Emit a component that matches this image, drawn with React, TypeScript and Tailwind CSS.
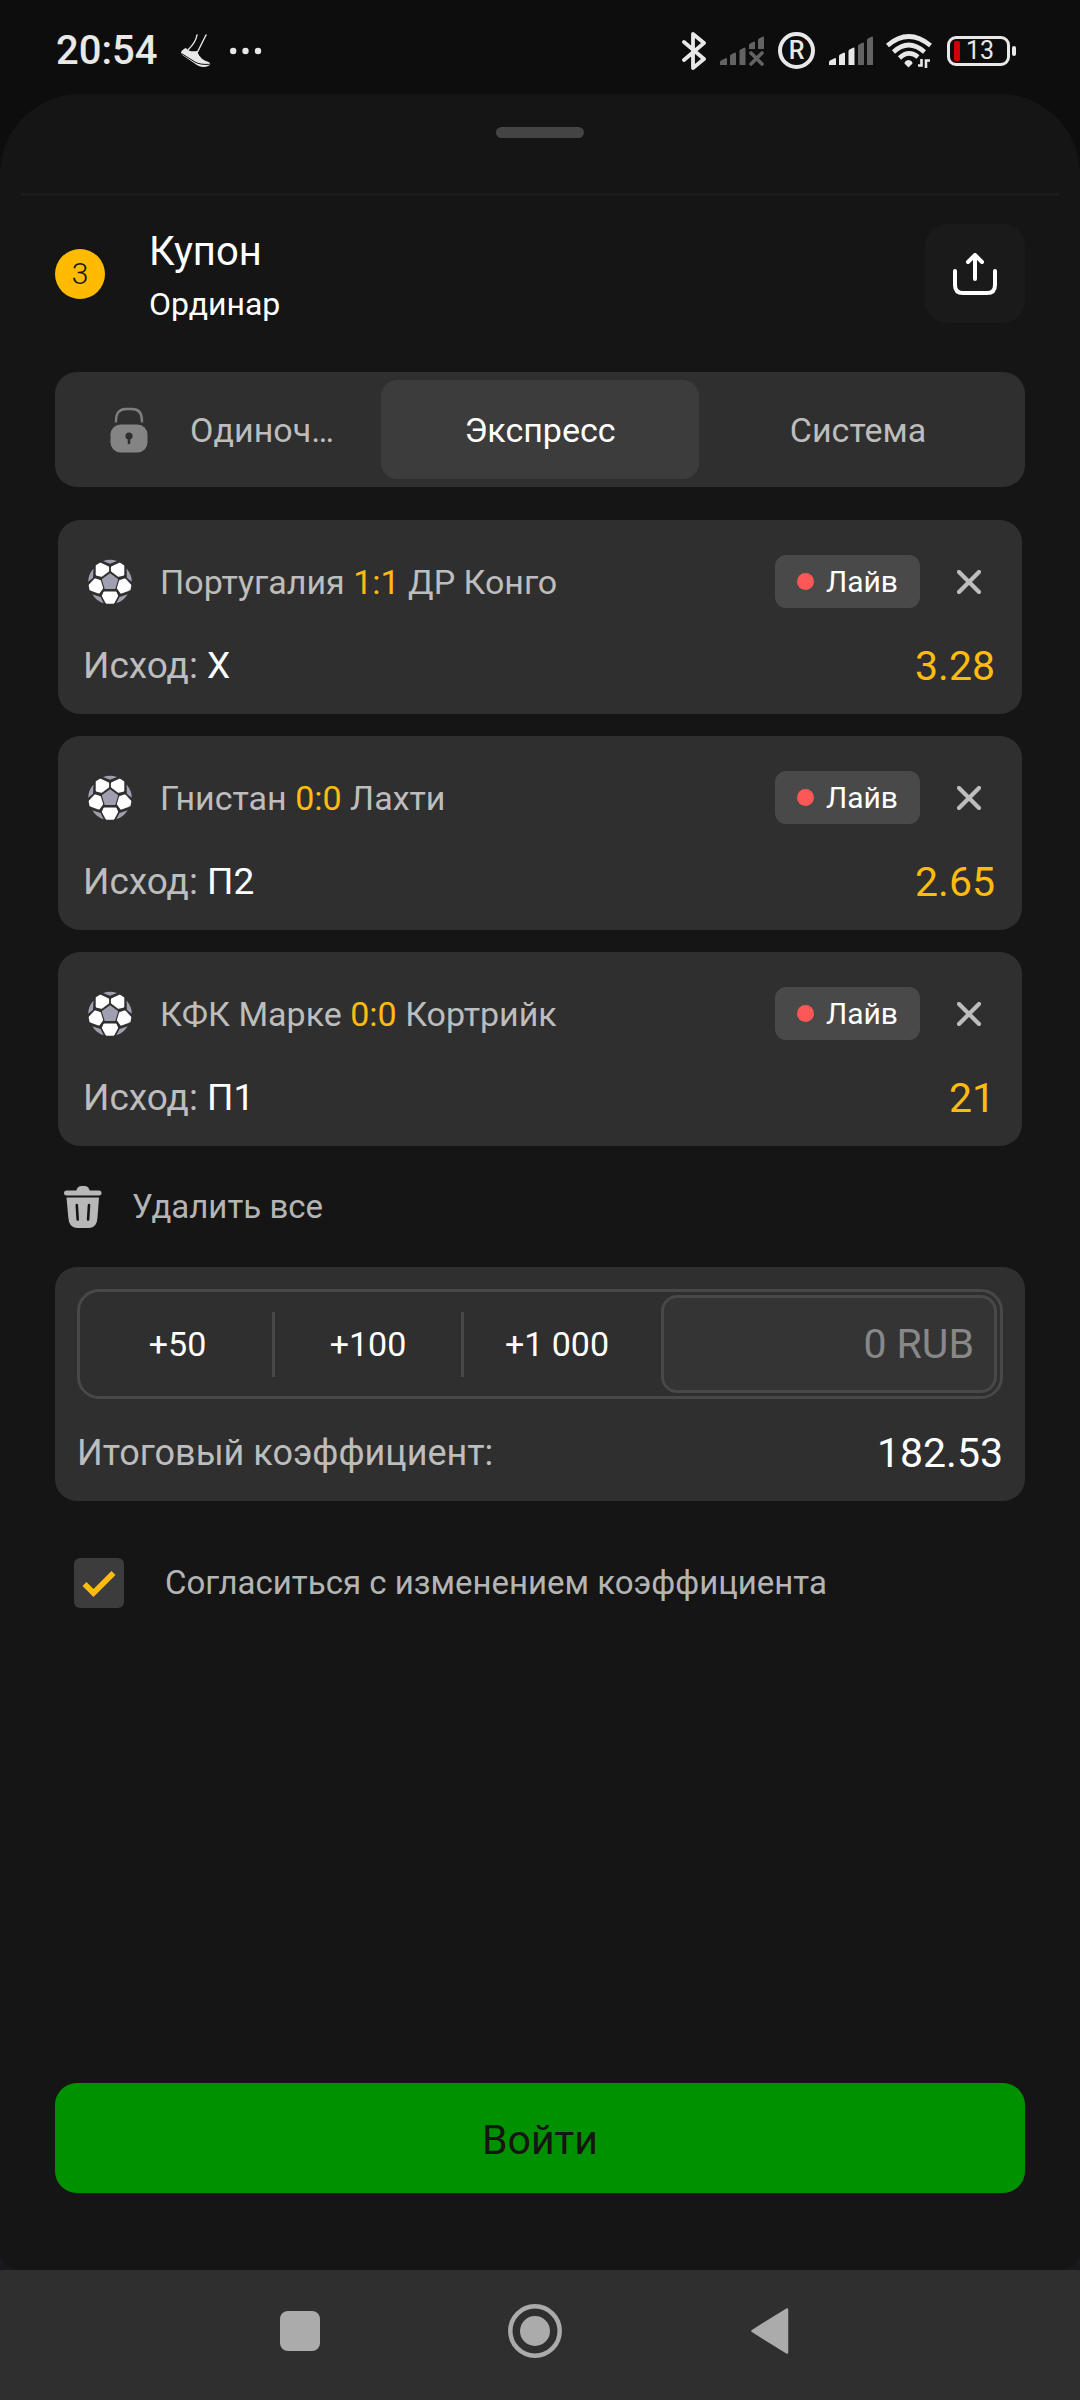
import { useState } from "react";
import clsx from "clsx";

interface Bet {
  id: number;
  home: string;
  score: string;
  away: string;
  outcome: string;
  odds: string;
}

const INITIAL_BETS: Bet[] = [
  { id: 1, home: "Португалия", score: "1:1", away: "ДР Конго", outcome: "X", odds: "3.28" },
  { id: 2, home: "Гнистан", score: "0:0", away: "Лахти", outcome: "П2", odds: "2.65" },
  { id: 3, home: "КФК Марке", score: "0:0", away: "Кортрийк", outcome: "П1", odds: "21" },
];

const TABS = [
  { id: "single", label: "Одиноч…", locked: true },
  { id: "express", label: "Экспресс", locked: false },
  { id: "system", label: "Система", locked: false },
];

const QUICK_STAKES = ["+50", "+100", "+1 000"];

function SignalBars({ active, noSim }: { active: number; noSim?: boolean }) {
  const fill = (i: number) => (i < active ? "#e8e8e8" : "#636363");
  return (
    <svg width="44" height="30" viewBox="0 0 44 30" aria-hidden="true">
      <path d="M0 29v-3q0-1 1-1.600l5-2.400q1 0 1 1v6z" fill={fill(0)} />
      <path d="M10 29V20q0-1 1-1.500l4-2q1 0 1 1V29z" fill={fill(1)} />
      <path d="M19.500 29V15q0-1 1-1.500l4-2q1 0 1 1V29z" fill={fill(2)} />
      {noSim ? (
        <>
          <path d="M29 13V9q0-1 1-1.500l4-2q1 0 1 1V13z" fill={fill(3)} />
          <path d="M38 13V4q0-1 1-1.500l4-2q1 0 1 1V13z" fill={fill(4)} />
          <path d="M31 17l11 11M42 17L31 28" stroke={fill(4)} strokeWidth="3.600" strokeLinecap="round" />
        </>
      ) : (
        <>
          <path d="M29 29V10q0-1 1-1.500l4-2q1 0 1 1V29z" fill={fill(3)} />
          <path d="M38 29V4q0-1 1-1.500l4-2q1 0 1 1V29z" fill={fill(4)} />
        </>
      )}
    </svg>
  );
}

function StatusBar() {
  return (
    <div className="flex h-[94px] items-center justify-between pl-[56px] pr-[64px] pt-[7px] text-[#e8e8e8]">
      <div className="flex items-center">
        <span className="text-[40px] font-medium leading-[44px]">20:54</span>
        <svg className="ml-6" width="29" height="33" viewBox="0 0 29 33" aria-hidden="true">
          <path d="M16 1C15 7 11 12 7 16" fill="none" stroke="#e8e8e8" strokeWidth="1.400" strokeLinecap="round" />
          <path d="M25 1L16.500 18" fill="none" stroke="#e8e8e8" strokeWidth="1.400" strokeLinecap="round" />
          <path
            d="M5 14q1.500 3 5 3.300 3.500.2 6-.3c1 3 3 6 6 8.500q2 1.500 5 2.200 2 .6 2 2.300-.5 2.500-6.500 3Q18 33 13 29L2 21.500Q0 20 0 18.500q1-3 5-4.500z"
            fill="#e8e8e8"
          />
          <path d="M.5 19.500L14 28q5 3 14.500 2.300" fill="none" stroke="#0d0d0d" strokeWidth="1" />
          <path d="M17 19l2-.8M18.300 21.500l2-.8M20 24l1.800-.8" stroke="#0d0d0d" strokeWidth=".8" />
        </svg>
        <svg className="ml-5" width="32" height="8" viewBox="0 0 32 8" fill="#e8e8e8" aria-hidden="true">
          <circle cx="3.200" cy="4" r="3.200" />
          <circle cx="15.500" cy="4" r="3.200" />
          <circle cx="28" cy="4" r="3.200" />
        </svg>
      </div>
      <div className="flex items-center">
        <svg width="24" height="38" viewBox="0 0 24 38" aria-hidden="true">
          <path
            d="M2 10l20 17-11 9V2l11 9L2 28"
            fill="none"
            stroke="#e8e8e8"
            strokeWidth="3.800"
            strokeLinecap="round"
            strokeLinejoin="round"
          />
        </svg>
        <div className="ml-[14px]">
          <SignalBars active={0} noSim />
        </div>
        <span className="ml-[14px] flex size-[37px] items-center justify-center rounded-full border-4 border-[#e8e8e8] text-[25px] font-medium leading-none">
          R
        </span>
        <div className="ml-[14px]">
          <SignalBars active={3} />
        </div>
        <svg className="ml-[13px]" width="46" height="34" viewBox="0 0 46 34" aria-hidden="true">
          <g fill="none" stroke="#e8e8e8" strokeWidth="4.600">
            <path d="M1.500 11.500Q22.500-6.500 44.500 11.500" />
            <path d="M7.500 18Q22.500 4 38.500 18" />
            <path d="M13.500 24Q22.500 15.500 32 23" />
          </g>
          <path d="M22.500 33.500l-4-4q0-3 4-3.500 4 .5 4 3.500z" fill="#e8e8e8" />
          <path d="M32 31.500h3.500V25M40 34v-7.500h4" fill="none" stroke="#e8e8e8" strokeWidth="2.600" />
        </svg>
        <div className="ml-[15px] flex items-center gap-[2px]">
          <div className="flex h-[30px] w-[63px] items-center rounded-[9px] border-3 border-[#e8e8e8] pl-[4px]">
            <span className="h-[20px] w-[6px] rounded-[2px] bg-[#d20000]" />
            <span className="ml-[6px] text-[25px] leading-[24px]">13</span>
          </div>
          <span className="h-[10px] w-[4px] rounded-[2px] bg-[#e8e8e8]" />
        </div>
      </div>
    </div>
  );
}

function LockIcon() {
  return (
    <svg width="38" height="46" viewBox="0 0 38 46" aria-hidden="true">
      <path d="M6 15.500V14Q6 2 16 2h6q10 0 10 12v1.500" fill="none" stroke="#7f7f7f" strokeWidth="2.400" />
      <rect x="0.500" y="17.500" width="37" height="28" rx="10" fill="#848484" />
      <circle cx="19" cy="29" r="3.600" fill="#2f2f2f" />
      <path d="M19 30v6" stroke="#2f2f2f" strokeWidth="2.600" strokeLinecap="round" />
    </svg>
  );
}

function BallIcon() {
  return (
    <svg className="w-[54px] shrink-0" height="46" viewBox="-27 -23 54 46" strokeLinejoin="round" aria-hidden="true">
      <g fill="#a09fb0">
        <path d="M0-8.800L8.300-2.800 5.300 7H-5.300L-8.300-2.800z" />
        <path d="M-7-21Q0-23.500 7-21L0-18.300z" />
        <path d="M-16.500-13.500l-.5 9.500-4.800 3.700Q-22-7-16.500-13.500z" />
        <path d="M16.500-13.500l.5 9.500 4.800 3.700Q22-7 16.500-13.500z" />
        <path d="M-17.800 12.300L-9.500 15-6.300 21.300Q-13 19.500-17.800 12.300z" />
        <path d="M17.800 12.300L9.500 15 6.300 21.300Q13 19.500 17.800 12.300z" />
      </g>
      <g fill="#fff" stroke="#fff" strokeWidth="2.600">
        <path d="M-13-16l3.200-2L-2.200-14.500v3.300L-8.500-6.500-13-7.500z" />
        <path d="M13-16l-3.200-2L2.200-14.500v3.300L8.500-6.500 13-7.500z" />
        <path d="M-14.700-2.300L-10.300-.8-8.200 6-11.200 10.200-19.300 7.300-20 3.500z" />
        <path d="M14.700-2.300L10.300-.8 8.200 6 11.200 10.200 19.300 7.300 20 3.500z" />
        <path d="M-5.500 10.800H5.500L6.800 14 3.300 20.500H-3.300L-6.800 14z" />
      </g>
    </svg>
  );
}

function BetCard({ bet, onRemove }: { bet: Bet; onRemove: () => void }) {
  return (
    <li className="rounded-[22px] bg-[#2f2f2f] pb-[26px] pl-[25px] pr-[27px] pt-[35px]">
      <div className="flex h-[53px] items-center">
        <BallIcon />
        <p className="ml-[23px] flex-1 truncate text-[34px] leading-[44px] text-[#bdbdbd]">
          {bet.home} <span className="text-[#ffbb0f]">{bet.score}</span> {bet.away}
        </p>
        <span className="flex h-[53px] items-center gap-3 rounded-[11px] bg-[#494949] px-[22px] text-[30px] leading-[40px] text-white">
          <span className="size-[17px] rounded-full bg-[#ff5757]" />
          Лайв
        </span>
        <button
          type="button"
          aria-label="Удалить"
          onClick={onRemove}
          className="ml-[23px] flex size-[52px] items-center justify-center"
        >
          <svg width="24" height="24" viewBox="0 0 24 24" aria-hidden="true">
            <path d="M2 2l20 20M22 2L2 22" stroke="#bdbdbd" strokeWidth="4.200" strokeLinecap="round" />
          </svg>
        </button>
      </div>
      <div className="mt-[36px] flex h-[44px] items-center justify-between">
        <p className="text-[37px] leading-[44px] text-[#bdbdbd]">
          Исход: <span className="text-white">{bet.outcome}</span>
        </p>
        <span className="text-[41px] leading-[44px] text-[#ffbb0f]">{bet.odds}</span>
      </div>
    </li>
  );
}

export default function App() {
  const [bets, setBets] = useState(INITIAL_BETS);
  const [tab, setTab] = useState("express");
  const [agree, setAgree] = useState(true);
  const [stake, setStake] = useState("");

  const addStake = (label: string) => {
    const amount = Number(label.replace(/\D/g, ""));
    setStake(String(Number(stake) + amount));
  };

  return (
    <div className="flex min-h-screen flex-col bg-[#0d0d0d] font-[Roboto,'Noto_Sans',sans-serif]">
      <StatusBar />

      <div className="flex flex-1 flex-col bg-[linear-gradient(#0d0d0d_50%,#19181d_50%)]">
        <main className="flex flex-1 flex-col rounded-b-[20px] rounded-t-[80px] bg-[#151515]">
          <div className="mx-auto mt-[33px] h-[11px] w-[88px] rounded-full bg-[#444444]" />
          <hr className="mx-[22px] mt-[55px] border-t-3 border-[#1b1b1b]" />

          <div className="flex flex-1 flex-col px-[55px]">
            <header className="mt-7 flex h-[99px] items-center">
              <span className="flex size-[50px] items-center justify-center rounded-full bg-[#ffbb00] text-[30px] font-light text-[#151515]">
                {bets.length}
              </span>
              <div className="ml-11 flex flex-1 flex-col gap-2 pt-[4px] text-white">
                <h1 className="text-[40px] leading-[48px]">Купон</h1>
                <p className="text-[32px] leading-[40px]">Ординар</p>
              </div>
              <button
                type="button"
                aria-label="Поделиться"
                className="flex h-[99px] w-[100px] items-center justify-center rounded-[22px] bg-[#1a1a1a]"
              >
                <svg
                  width="44"
                  height="42"
                  viewBox="0 0 44 42"
                  fill="none"
                  stroke="#fff"
                  strokeWidth="4"
                  strokeLinecap="round"
                  strokeLinejoin="round"
                  aria-hidden="true"
                >
                  <path d="M2 18v14q0 8 8 8h24q8 0 8-8V18" />
                  <path d="M22 26V2M15 9l7-7 7 7" />
                </svg>
              </button>
            </header>

            <div role="tablist" className="mt-[49px] grid h-[115px] grid-cols-3 rounded-[22px] bg-[#2f2f2f] p-2">
              {TABS.map((t) => (
                <button
                  key={t.id}
                  type="button"
                  role="tab"
                  aria-selected={tab === t.id}
                  onClick={() => setTab(t.id)}
                  className={clsx(
                    "flex items-center justify-center rounded-2xl text-[34px] leading-[44px]",
                    tab === t.id ? "bg-[#3c3c3c] text-white" : "text-[#bdbdbd]",
                    t.locked && "gap-[42px]"
                  )}
                >
                  {t.locked && <LockIcon />}
                  {t.label}
                </button>
              ))}
            </div>

            <ul className="mx-[3px] mt-[33px] flex flex-col gap-[22px]">
              {bets.map((bet) => (
                <BetCard key={bet.id} bet={bet} onRemove={() => setBets(bets.filter((b) => b.id !== bet.id))} />
              ))}
            </ul>

            <button
              type="button"
              onClick={() => setBets([])}
              className="flex h-[121px] items-center gap-[30px] self-start pl-[9px] text-[33px] leading-[44px] text-[#b4b4b4]"
            >
              <svg width="38" height="42" viewBox="0 0 38 42" aria-hidden="true">
                <rect x="0" y="4.500" width="37.500" height="5" rx="2.500" fill="#b8b8b8" />
                <path d="M12 6q1-6 5-6h4q4 0 5 6z" fill="#b8b8b8" />
                <path d="M2.500 11.500h32.500l-1.500 20Q33 42 25 42H13Q5 42 4.300 31.500z" fill="#b8b8b8" />
                <path d="M12.800 19l.9 14.500M25 19l-.9 14.500" stroke="#151515" strokeWidth="2.600" strokeLinecap="round" />
              </svg>
              Удалить все
            </button>

            <section className="rounded-[22px] bg-[#2f2f2f] px-[22px] pb-[26px] pt-[22px]">
              <div className="flex h-[110px] items-center rounded-[22px] border-3 border-[#484848] p-[3px]">
                <div className="grid flex-1 grid-cols-3">
                  {QUICK_STAKES.map((label, i) => (
                    <button
                      key={label}
                      type="button"
                      onClick={() => addStake(label)}
                      className={clsx(
                        "h-[65px] text-[34px] leading-[44px] text-white",
                        i > 0 && "border-l-3 border-[#484848]"
                      )}
                    >
                      {label}
                    </button>
                  ))}
                </div>
                <input
                  aria-label="Сумма ставки"
                  inputMode="numeric"
                  placeholder="0 RUB"
                  value={stake}
                  onChange={(e) => setStake(e.target.value.replace(/\D/g, ""))}
                  className="ml-[11px] h-[98px] w-84 rounded-2xl border-3 border-[#484848] bg-[#343434] px-5 text-right text-[41px] text-white outline-none placeholder:text-[#888888]"
                />
              </div>
              <div className="mt-[32px] flex h-[44px] items-center justify-between">
                <span className="text-[36px] leading-[44px] text-[#bdbdbd]">Итоговый коэффициент:</span>
                <span className="text-[41px] leading-[44px] text-white">182.53</span>
              </div>
            </section>

            <label className="mt-[57px] flex h-[50px] items-center gap-[41px] pl-[19px] text-[33px] leading-[44px] text-[#b4b4b4]">
              <span className="relative size-[50px]">
                <input
                  type="checkbox"
                  checked={agree}
                  onChange={(e) => setAgree(e.target.checked)}
                  className="block size-[50px] appearance-none rounded-[6px] bg-[#3c3c3c]"
                />
                {agree && (
                  <svg className="pointer-events-none absolute inset-0" viewBox="0 0 50 50" fill="none" aria-hidden="true">
                    <path d="M10.500 26l9 9L39.500 15" stroke="#ffbb0f" strokeWidth="5.600" />
                  </svg>
                )}
              </span>
              Согласиться с изменением коэффициента
            </label>

            <button
              type="button"
              className="mb-[77px] mt-auto h-[110px] rounded-[22px] bg-[#009100] pt-[4px] text-[41px] leading-[48px] text-[#151515]"
            >
              Войти
            </button>
          </div>
        </main>
      </div>

      <nav className="flex h-[130px] items-center justify-center gap-[135px] bg-[#2f2f2f] pb-2 pr-[10px]">
        <button type="button" aria-label="Недавние" className="flex w-[100px] justify-center">
          <span className="size-10 rounded-[8px] bg-[#ababab]" />
        </button>
        <button type="button" aria-label="Домой" className="flex w-[100px] justify-center">
          <svg width="54" height="54" viewBox="0 0 54 54" aria-hidden="true">
            <circle cx="27" cy="27" r="24.700" fill="none" stroke="#ababab" strokeWidth="4.500" />
            <circle cx="27" cy="27" r="15" fill="#ababab" />
          </svg>
        </button>
        <button type="button" aria-label="Назад" className="flex w-[100px] justify-center">
          <svg width="38" height="46" viewBox="0 0 38 46" aria-hidden="true">
            <path d="M36 1.500v43L1.500 23z" fill="#ababab" stroke="#ababab" strokeWidth="2.500" strokeLinejoin="round" />
          </svg>
        </button>
      </nav>
    </div>
  );
}
